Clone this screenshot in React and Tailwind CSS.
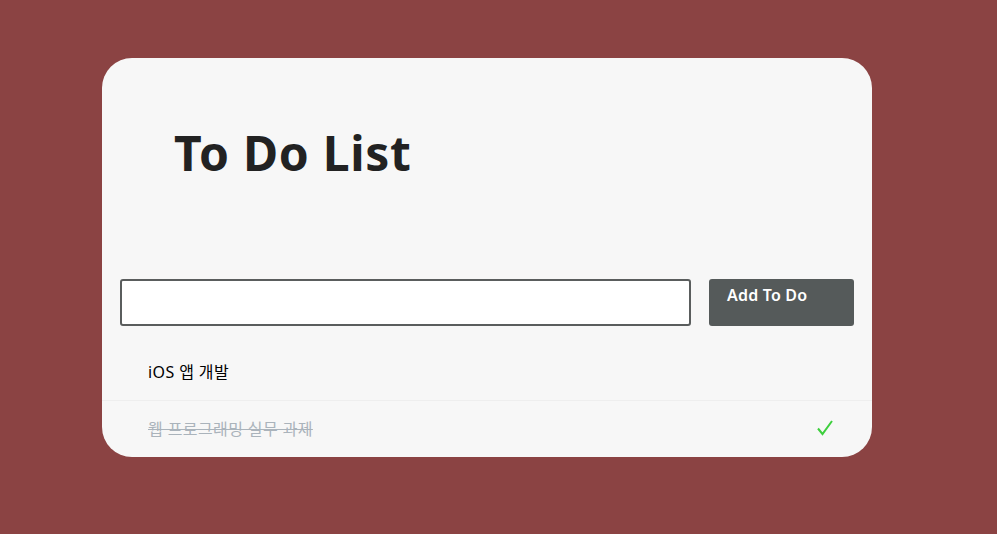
import React, { useState } from 'react';

const initialTodos = [
  { id: 1, text: 'iOS 앱 개발', done: false },
  { id: 2, text: '웹 프로그래밍 실무 과제', done: true },
];

const App = () => {
  const [todos, setTodos] = useState(initialTodos);
  const [input, setInput] = useState('');

  const addTodo = () => {
    if (!input.trim()) return;
    setTodos([...todos, { id: Date.now(), text: input, done: false }]);
    setInput('');
  };

  return (
    <div className="min-h-screen w-full bg-[#8b4343] pt-[58px] pl-[102px] font-['Noto_Sans','Noto_Sans_CJK_KR',sans-serif]">
      <div className="w-[770px] h-[399px] bg-[#f7f7f7] rounded-[30px] overflow-hidden flex flex-col">
        {/* Title */}
        <h1 className="pt-[62px] pl-[72px] text-[48px] leading-[65px] font-bold tracking-[0.7px] text-[#222222]">To Do List</h1>

        {/* Input row */}
        <div className="mt-[94px] px-[18px] flex gap-[18px] h-[47px]">
          <input
            value={input}
            onChange={(e) => setInput(e.target.value)}
            className="w-[571px] h-full bg-white border-2 border-[#5a5d5d] rounded-[3px] outline-none px-2 text-base"
          />
          <button
            onClick={addTodo}
            className="w-[145px] h-full bg-[#555a5a] rounded-[3px] text-white text-[16px] font-semibold tracking-[0.2px] flex items-start pl-[18px] pt-[5px] leading-[22px]"
          >
            Add To Do
          </button>
        </div>

        {/* List */}
        <ul className="mt-[17px] flex flex-col">
          {todos.map((todo, i) => (
            <li
              key={todo.id}
              className={`h-[57px] flex items-center justify-between pl-[46px] pr-[39px] ${i > 0 ? 'border-t border-[#eeeeee]' : ''}`}
            >
              <span className={`text-[16px] leading-[22px] tracking-[0.4px] ${todo.done ? 'text-[#aab3bb] line-through' : 'text-black'}`}>
                {todo.text}
              </span>
              {todo.done && (
                <svg width="16" height="16" viewBox="0 0 16 16" className="mb-[2px]">
                  <polyline points="1,8.5 5.5,14 15,1" fill="none" stroke="#3ecf3e" strokeWidth="2" />
                </svg>
              )}
            </li>
          ))}
        </ul>
      </div>
    </div>
  );
};

export default App;
